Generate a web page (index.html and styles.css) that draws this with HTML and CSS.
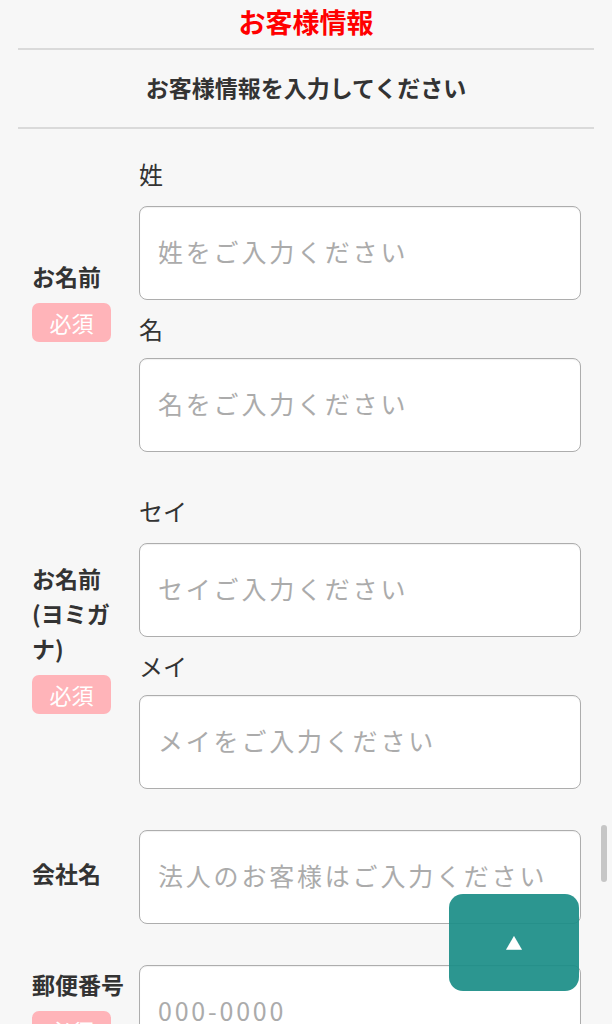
FILE: index.html
```html
<!DOCTYPE html>
<html lang="ja">
<head>
<meta charset="utf-8">
<title>お客様情報</title>
<link rel="stylesheet" href="styles.css">
</head>
<body>
<header class="page-head">
  <h1 class="title">お客様情報</h1>
  <hr class="rule">
  <p class="subtitle">お客様情報を入力してください</p>
  <hr class="rule">
</header>

<form class="form">
  <div class="row">
    <div class="label-col">
      <div class="label">お名前</div>
      <span class="badge">必須</span>
    </div>
    <div class="field-col">
      <div class="sublabel first">姓</div>
      <input class="input" type="text" placeholder="姓をご入力ください">
      <div class="sublabel">名</div>
      <input class="input" type="text" placeholder="名をご入力ください">
    </div>
  </div>

  <div class="row">
    <div class="label-col">
      <div class="label">お名前<br>(ヨミガナ)</div>
      <span class="badge">必須</span>
    </div>
    <div class="field-col">
      <div class="sublabel first">セイ</div>
      <input class="input" type="text" placeholder="セイご入力ください">
      <div class="sublabel">メイ</div>
      <input class="input" type="text" placeholder="メイをご入力ください">
    </div>
  </div>

  <div class="row">
    <div class="label-col">
      <div class="label">会社名</div>
    </div>
    <div class="field-col">
      <input class="input" type="text" placeholder="法人のお客様はご入力ください">
    </div>
  </div>

  <div class="row">
    <div class="label-col">
      <div class="label">郵便番号</div>
      <span class="badge">必須</span>
    </div>
    <div class="field-col">
      <input class="input" type="text" placeholder="000-0000">
    </div>
  </div>
</form>

<a class="to-top" href="#">▲</a>
<div class="scroll-thumb"></div>
</body>
</html>
```

FILE: styles.css
```css
html {
  scrollbar-width: none;
}
html::-webkit-scrollbar {
  display: none;
}
body {
  margin: 0;
  background: #f7f7f7;
  font-family: "Noto Sans CJK JP", "Noto Sans", sans-serif;
  color: #333;
}
.page-head {
  margin: 0 18px;
}
.title {
  margin: 0;
  height: 48px;
  line-height: 44px;
  text-align: center;
  font-size: 27px;
  font-weight: 700;
  color: #ff0000;
}
.rule {
  margin: 0;
  border: 0;
  border-top: 2px solid #dadada;
}
.subtitle {
  margin: 0;
  height: 77px;
  line-height: 74px;
  text-align: center;
  font-size: 23px;
  font-weight: 700;
  color: #333;
}
.form {
  padding: 27px 31px 0 32px;
}
.row {
  display: flex;
  align-items: center;
  margin-bottom: 41px;
}
.label-col {
  width: 96px;
  margin-right: 11px;
  padding-bottom: 7px;
  flex-shrink: 0;
}
.label {
  font-size: 23px;
  font-weight: 700;
  line-height: 35px;
  color: #333;
}
.badge {
  display: inline-block;
  margin-top: 9px;
  width: 79px;
  height: 39px;
  line-height: 38px;
  border-radius: 7px;
  background: #ffb4b9;
  color: #fff;
  font-size: 22px;
  text-align: center;
}
.field-col {
  width: 442px;
  display: flex;
  flex-direction: column;
}
.sublabel {
  font-size: 24px;
  line-height: 30px;
  margin: 14px 0 14px;
  color: #333;
}
.sublabel.first {
  margin-top: 6px;
  position: relative;
  top: -3px;
}
.input {
  box-sizing: border-box;
  width: 100%;
  height: 94px;
  margin: 0;
  padding: 0 0 4px 18px;
  border: 1.5px solid #adadad;
  border-radius: 8px;
  background: #fff;
  box-shadow: inset 0 1px 1px rgba(0, 0, 0, 0.06);
  font-family: "Noto Sans CJK JP", "Noto Sans", sans-serif;
  font-size: 25px;
  letter-spacing: 2.8px;
  color: #333;
  outline: none;
}
.input::placeholder {
  color: #ababab;
}
.to-top {
  position: fixed;
  left: 449px;
  top: 894px;
  width: 130px;
  height: 97px;
  border-radius: 14px;
  background: rgba(26, 141, 135, 0.92);
  color: #fff;
  font-size: 17px;
  line-height: 97px;
  text-align: center;
  text-decoration: none;
}
.scroll-thumb {
  position: fixed;
  left: 601px;
  top: 825px;
  width: 6px;
  height: 57px;
  border-radius: 3px;
  background: #c6c6c6;
}
```
